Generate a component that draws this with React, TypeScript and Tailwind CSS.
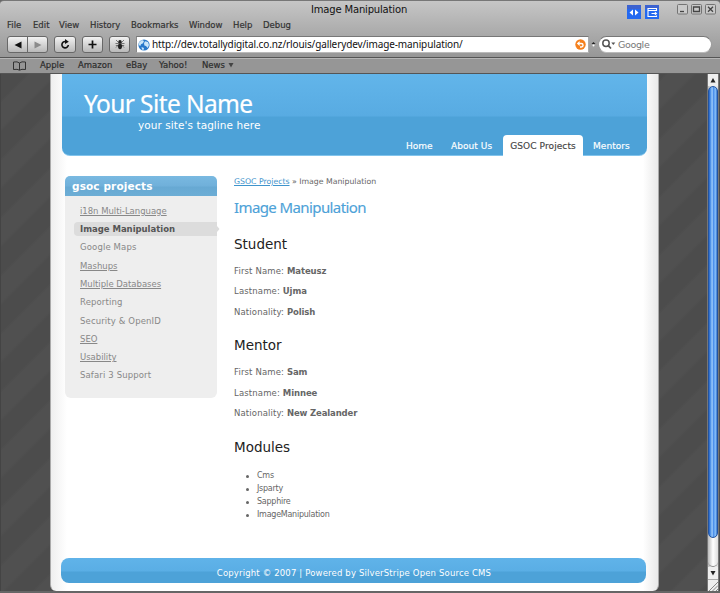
import React from "react";

const menu = [
  { label: "File", slot: "w-[26px]" },
  { label: "Edit", slot: "w-[26px]" },
  { label: "View", slot: "w-[31px]" },
  { label: "History", slot: "w-[41px]" },
  { label: "Bookmarks", slot: "w-[58px]" },
  { label: "Window", slot: "w-[44px]" },
  { label: "Help", slot: "w-[30px]" },
  { label: "Debug", slot: "w-[30px]" },
];

const bookmarks = [
  { label: "Apple", slot: "w-[38px]" },
  { label: "Amazon", slot: "w-[48px]" },
  { label: "eBay", slot: "w-[33px]" },
  { label: "Yahoo!", slot: "w-[43px]" },
  { label: "News", slot: "w-[26px]" },
];

const projects = [
  { label: "i18n Multi-Language", link: true },
  { label: "Image Manipulation", current: true },
  { label: "Google Maps" },
  { label: "Mashups", link: true },
  { label: "Multiple Databases", link: true },
  { label: "Reporting" },
  { label: "Security & OpenID" },
  { label: "SEO", link: true },
  { label: "Usability", link: true },
  { label: "Safari 3 Support" },
];

const people = [
  { role: "Student", first: "Mateusz", last: "Ujma", nation: "Polish" },
  { role: "Mentor", first: "Sam", last: "Minnee", nation: "New Zealander" },
];

const modules = ["Cms", "Jsparty", "Sapphire", "ImageManipulation"];

const button =
  "flex h-[17px] items-center justify-center rounded-[3px] border border-[#686868] bg-linear-to-b from-[#f2f2f2] to-[#b9b9b9]";

function TitleBar() {
  return (
    <div className="relative h-[18px] pl-[311px] text-[10px] leading-[18px] text-[#111]">
      <span className="tracking-[-0.17px]">Image Manipulation</span>
      <div className="absolute top-[4px] left-[627px] flex gap-[4px]">
        <svg width="14" height="15" viewBox="0 0 14 15">
          <rect width="14" height="14" fill="#2469f0" />
          <path d="M0 0H14V4H0Z" fill="#3c62d0" />
          <path d="M6 4.5V10.5L2.5 7.5ZM8 4.5V10.5L11.5 7.5Z" fill="#fff" />
        </svg>
        <svg width="14" height="15" viewBox="0 0 14 15">
          <rect width="14" height="14" fill="#2469f0" />
          <path d="M0 0H14V4H0Z" fill="#3c62d0" />
          <path d="M11.5 6V3.5H3V11.5H11.5V10.5M3 5.5H11.5M6.5 8.5H10.5" fill="none" stroke="#fff" strokeWidth="1.1" />
          <path d="M9.8 6.5L12.3 8.5L9.8 10.5Z" fill="#fff" />
        </svg>
      </div>
      <div className="absolute top-[3px] left-[677px] flex gap-[3px]">
        {["M3 7.5H7", "M2.5 3H8.5V7.5H2.5Z", "M3 2.8L8 7.8M8 2.8L3 7.8"].map((d) => (
          <svg key={d} width="11" height="11" viewBox="0 0 11 11">
            <rect x=".5" y=".5" width="10" height="9.5" rx="1" fill="#c9c9c9" stroke="#747474" />
            <path d={d} fill="none" stroke="#444" strokeWidth="1.3" />
          </svg>
        ))}
      </div>
    </div>
  );
}

function Toolbar() {
  return (
    <div className="flex h-[23px] items-center pl-[7px]">
      <div className="mr-[6px] flex">
        <div className={button + " w-[21px] rounded-r-none"}>
          <svg width="8" height="8" viewBox="0 0 8 8"><path d="M7.5 .5V7.5L.5 4Z" fill="#111" /></svg>
        </div>
        <div className={button + " -ml-px w-[21px] rounded-l-none"}>
          <svg width="8" height="8" viewBox="0 0 8 8"><path d="M.5 .5V7.5L7.5 4Z" fill="#8b8b8b" /></svg>
        </div>
      </div>
      <div className={button + " mr-[6px] w-[22px]"}>
        <svg width="10" height="11" viewBox="0 0 10 11">
          <path d="M5.5 2.5A3.2 3.2 0 1 0 8.3 6" fill="none" stroke="#111" strokeWidth="1.6" />
          <path d="M5 0L8.8 2.7L5 5Z" fill="#111" />
        </svg>
      </div>
      <div className={button + " mr-[6px] w-[21px]"}>
        <svg width="9" height="9" viewBox="0 0 9 9"><path d="M4.5 .5V8.5M.5 4.5H8.5" stroke="#111" strokeWidth="1.7" /></svg>
      </div>
      <div className={button + " mr-[6px] w-[21px]"}>
        <svg width="10" height="11" viewBox="0 0 10 11">
          <path d="M1 1L4 4M9 1L6 4M.5 4.5H9.5M1 8.5L4 5.5M9 8.5L6 5.5M.8 6.5H9.2" stroke="#333" strokeWidth=".6" />
          <ellipse cx="5" cy="7.3" rx="2" ry="2.9" fill="#222" />
          <circle cx="5" cy="2.8" r="1.7" fill="#222" />
        </svg>
      </div>
      <div className="flex h-[17px] w-[453px] items-center border border-t-[#777] border-r-[#aaa] border-b-[#bbb] border-l-[#888] bg-white pl-px">
        <svg width="12" height="12" viewBox="0 0 12 12">
          <circle cx="6" cy="6" r="5.6" fill="#2778ca" />
          <path d="M1.2 3.2L4 1L6 2L5 4.2L3 5.2L2.3 7L.8 6ZM7 2.2L10 3L11 6L9.7 9L8 7L6.4 6.4L6 4.2ZM3.5 8L6 9L5.5 11L4 10.4Z" fill="#c9e5f8" />
        </svg>
        <span className="ml-[2px] grow font-['Noto_Sans','DejaVu_Sans',sans-serif] text-[10px] leading-[15px] tracking-[-0.12px] whitespace-nowrap text-[#111]">
          http://dev.totallydigital.co.nz/rlouis/gallerydev/image-manipulation/
        </span>
        <svg className="mr-[2px]" width="11" height="11" viewBox="0 0 11 11">
          <circle cx="5.5" cy="5.5" r="5.2" fill="#f5801d" />
          <path d="M3.2 4.5H6.3A1.7 1.7 0 0 1 6.3 8H5" fill="none" stroke="#fff" strokeWidth="1.4" />
          <path d="M1.8 4.5L4.6 2V7Z" fill="#fff" />
        </svg>
      </div>
      <svg width="9" height="9" viewBox="0 0 9 9">
        <path d="M2.5 4L4.5 2L6.5 4Z" fill="#222" /><circle cx="4.5" cy="5.6" r="1" fill="#fff" />
      </svg>
      <div className="flex h-[17px] w-[114px] items-center rounded-full border border-t-[#777] border-r-[#999] border-b-[#bbb] border-l-[#999] bg-white pl-[3px]">
        <svg width="14" height="11" viewBox="0 0 14 11">
          <circle cx="4" cy="4.3" r="3.2" fill="none" stroke="#555" strokeWidth="1.5" />
          <path d="M6.3 6.7L9 9.5" stroke="#555" strokeWidth="1.8" />
          <path d="M9.3 3.5H13.3L11.3 6Z" fill="#555" />
        </svg>
        <span className="ml-[2px] text-[9.5px] leading-[15px] tracking-[-0.35px] text-[#777]">Google</span>
      </div>
    </div>
  );
}

function Chrome() {
  return (
    <>
      <div className="h-[57px] rounded-t-[4px] border-t border-[#777] bg-linear-to-b from-[#c6c6c6] to-[#979797]">
        <TitleBar />
        <div className="flex h-[14px] pl-[7px] text-[8.5px] leading-[13px] text-[#333] [-webkit-text-stroke:0.2px]">
          {menu.map((m) => <span key={m.label} className={m.slot}>{m.label}</span>)}
        </div>
        <Toolbar />
      </div>
      <div className="flex h-[17px] items-center border-t border-b border-[#555] bg-[#969696] pl-[12px] text-[8.5px] text-[#2d2d2d] shadow-[inset_0_1px_0_#b5b5b5] [-webkit-text-stroke:0.2px]">
        <svg className="mr-[13px]" width="15" height="10" viewBox="0 0 15 10">
          <path d="M7.5 2Q5.5 .2 1.5 1V8.5Q5.5 7.8 7.5 9.2Q9.5 7.8 13.5 8.5V1Q9.5 .2 7.5 2V9" fill="none" stroke="#333" strokeWidth="1" />
        </svg>
        {bookmarks.map((b) => <span key={b.label} className={b.slot}>{b.label}</span>)}
        <svg width="6" height="5" viewBox="0 0 6 5"><path d="M.5 0H5.5L3 4.5Z" fill="#444" /></svg>
      </div>
    </>
  );
}

function Header() {
  return (
    <header className="flex h-[82px] flex-col rounded-b-[8px] border-b border-[#82c4ec] bg-[linear-gradient(#62b5ea_0px,#58abe2_42px,#4da2d8_43px,#4da2d8_82px)] text-white">
      <div className="h-[44px] pt-[18px] pl-[22px] font-['Noto_Sans','DejaVu_Sans',sans-serif] text-[24.5px] leading-[24px] tracking-[-0.6px] [-webkit-text-stroke:0.2px]">Your Site Name</div>
      <div className="h-[18px] pl-[76px] text-[10.5px] leading-[16px] tracking-[0.07px]">your site's tagline here</div>
      <nav className="flex h-[20px] justify-end pr-[8px] text-[9px] leading-[20px] [-webkit-text-stroke:0.15px]">
        <span className="w-[45px] pt-px tracking-[-0.05px]">Home</span>
        <span className="w-[52px] pt-px tracking-[0.05px]">About Us</span>
        <span className="h-[21px] w-[80px] rounded-t-[4px] bg-white pt-px text-center tracking-[0.1px] text-[#444]">GSOC Projects</span>
        <span className="w-[56px] pt-px pl-[10px] tracking-[0.05px]">Mentors</span>
      </nav>
    </header>
  );
}

function Sidebar() {
  return (
    <aside className="h-[222px] w-[152px] rounded-[6px] bg-[#eee]">
      <h2 className="h-[20px] rounded-t-[5px] bg-[linear-gradient(#79b9e1_0px,#70b0da_10px,#67a9d3_11px,#6cadd5_20px)] pl-[7px] text-[10.5px] leading-[20px] font-bold tracking-[0.12px] text-white">
        gsoc projects
      </h2>
      <ul className="pt-[6px] pl-[9px] text-[8.5px] tracking-[-0.02px] text-[#888]">
        {projects.map((p) => (
          <li key={p.label} className="flex h-[18.3px] items-center">
            {p.current ? (
              <div className="flex w-[146px] shrink-0 items-center">
                <span className="h-[14px] w-[143px] rounded-l-[4px] bg-[#dcdcdc] pl-[6px] leading-[14px] font-bold text-[#555]">{p.label}</span>
                <svg width="3" height="6" viewBox="0 0 3 6"><path d="M0 0L2.5 3L0 6Z" fill="#dcdcdc" /></svg>
              </div>
            ) : (
              <span className={p.link ? "pl-[6px]" : "pl-[6px] tracking-[0.13px]"}>
                <span className={p.link ? "underline underline-offset-1" : ""}>{p.label}</span>
              </span>
            )}
          </li>
        ))}
      </ul>
    </aside>
  );
}

function Article() {
  return (
    <article className="ml-[17px] text-[8.5px] text-[#666]">
      <div className="h-[20px] text-[7.8px] leading-[11px] tracking-[-0.02px]">
        <span className="text-[#3f94cc] underline">GSOC Projects</span> » Image Manipulation
      </div>
      <h1 className="h-[38px] font-['Noto_Sans','DejaVu_Sans',sans-serif] text-[15px] leading-[23px] tracking-[-0.6px] text-[#4da2d8] [-webkit-text-stroke:0.15px]">Image Manipulation</h1>
      {people.map((p) => (
        <section key={p.role} className="h-[101.4px]">
          <h2 className="h-[28px] text-[13.5px] leading-[21px] text-[#222]">{p.role}</h2>
          <p className="h-[20.4px] leading-[19px] tracking-[0.14px]">First Name: <b className="tracking-[-0.08px]">{p.first}</b></p>
          <p className="h-[20.4px] leading-[19px] tracking-[0.14px]">Lastname: <b className="tracking-[-0.08px]">{p.last}</b></p>
          <p className="h-[20.4px] leading-[19px] tracking-[0.14px]">Nationality: <b className="tracking-[-0.14px]">{p.nation}</b></p>
        </section>
      ))}
      <h2 className="h-[33px] text-[13.5px] leading-[21px] text-[#222]">Modules</h2>
      <ul className="text-[8px] tracking-[-0.25px]">
        {modules.map((m) => (
          <li key={m} className="flex h-[13px] items-center pl-[12px]">
            <i className="mr-[8px] h-[3px] w-[3px] rounded-full bg-[#666]" />
            {m}
          </li>
        ))}
      </ul>
    </article>
  );
}

function Scrollbar() {
  return (
    <div className="flex w-[12px] flex-col border-x border-[#777] bg-linear-to-r from-[#bbb] via-white to-[#ddd]">
      <div className="flex h-[12px] items-center justify-center bg-[#eee]">
        <svg width="6" height="5" viewBox="0 0 6 5"><path d="M3 0L5.5 4.5H.5Z" fill="#222" /></svg>
      </div>
      <div className="h-[452px] rounded-full border border-[#2354a0] bg-[linear-gradient(90deg,#2462c6_0%,#5396ea_20%,#9fcdfb_40%,#4a8eea_55%,#83bcf8_80%,#3876cd_100%)]" />
      <div className="h-[29px] rounded-b-full border-b border-[#888]" />
      <div className="flex h-[13px] items-center justify-center border-b border-[#aaa] bg-[#eee]">
        <svg width="6" height="5" viewBox="0 0 6 5"><path d="M.5 0H5.5L3 4.5Z" fill="#222" /></svg>
      </div>
      <svg width="10" height="11" viewBox="0 0 10 11">
        <rect width="10" height="11" fill="#eee" />
        <path d="M1 11L10 2M4.5 11L10 5.5M8 11L10 9" stroke="#888" />
      </svg>
    </div>
  );
}

export default function App() {
  return (
    <div className="h-[593px] w-[720px] overflow-hidden bg-[#666] font-['DejaVu_Sans','Verdana',sans-serif]">
      <Chrome />
      <div className="flex h-[517px] border-l border-[#444] bg-[repeating-linear-gradient(135deg,#4c4c4c_0px,#4c4c4c_18px,#505050_21px,#505050_38px,#4c4c4c_41px)]">
        <div className="ml-[49px] flex w-[609px] flex-col rounded-b-[6px] border-x border-[#aaa] bg-[linear-gradient(90deg,#efefef_0px,#fff_16px,#fff_592px,#e9e9e9_607px)] pr-[11px] pl-[10px]">
          <div className="flex flex-col pl-px">
            <Header />
          </div>
          <div className="flex h-[402px] pt-[20px] pl-[4px]">
            <Sidebar />
            <Article />
          </div>
          <footer className="mr-px h-[25px] rounded-[8px] bg-[linear-gradient(#60b3e9_0px,#5aaee5_13px,#4da2d8_14px,#4da2d8_25px)] pl-px text-center text-[8.5px] leading-[30px] tracking-[0.16px] text-white">
            Copyright © 2007 | Powered by SilverStripe Open Source CMS
          </footer>
        </div>
        <div className="w-[48px]" />
        <Scrollbar />
      </div>
    </div>
  );
}
